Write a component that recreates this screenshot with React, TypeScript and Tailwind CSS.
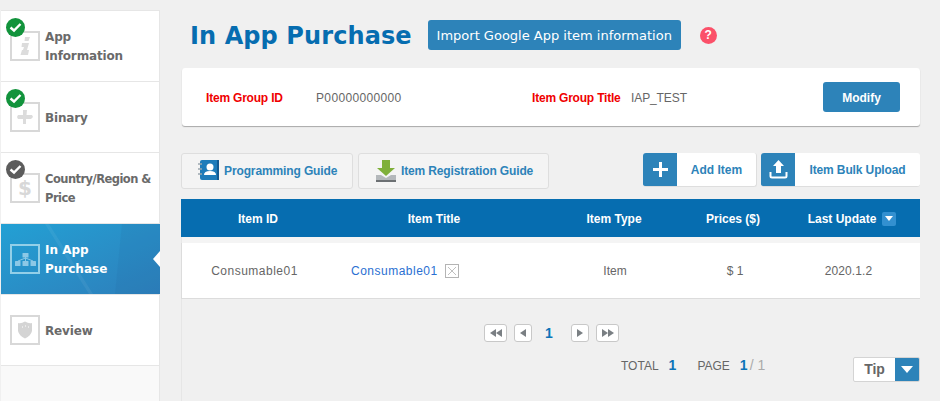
import React from "react";

const Check = ({ color }: { color: string }) => (
  <span className={`absolute left-[5px] top-[7px] flex h-[19px] w-[19px] items-center justify-center rounded-full ${color}`}>
    <svg width="13" height="11" viewBox="0 0 13 11">
      <path d="M1.5 5.5 L5 8.5 L11.5 2" fill="none" stroke="#fff" strokeWidth="2.4" />
    </svg>
  </span>
);

const Box = ({ active, children }: { active?: boolean; children: React.ReactNode }) => (
  <span className={`flex h-[30px] w-[30px] shrink-0 items-center justify-center border-[2px] ${active ? "border-[#93cfe8]" : "border-[#d8d8d8]"}`}>
    {children}
  </span>
);

const InfoIcon = () => (
  <svg width="11" height="19" viewBox="0 0 11 19" fill="#dcdcdc">
    <path d="M5 0 h5 l-1.5 4 h-4 z M2 6 h7 l-2 7 h2 l-1 5 H0.5 l1.5 -5 h1 l1 -3 H1.5 z" />
  </svg>
);
const PlusIcon = () => (
  <svg width="16" height="14" viewBox="0 0 16 14" fill="#dcdcdc">
    <path d="M6 0 h4 l-0.5 5 h5.5 l1 2 l-2 2 h-5 l0 5 h-3 l0 -5 H1 l-1 -2 l1 -2 h5 z" />
  </svg>
);
const DollarIcon = () => (
  <span className="text-[20px] leading-none font-bold text-[#d8d8d8]">$</span>
);
const TreeIcon = () => (
  <svg width="21" height="13" viewBox="0 0 21 13">
    <g fill="#8cc8e6">
      <rect x="7.5" y="0" width="6" height="4.5" rx="0.5" />
      <rect x="0" y="8" width="5.5" height="5" rx="0.5" />
      <rect x="7.5" y="8" width="6" height="5" rx="0.5" />
      <rect x="15.5" y="8" width="5.5" height="5" rx="0.5" />
    </g>
    <path d="M10.5 4 V8 M10.5 5 L3 8 M10.5 5 L18 8" stroke="#8cc8e6" fill="none" />
  </svg>
);
const ShieldIcon = () => (
  <svg width="16" height="18" viewBox="0 0 16 18">
    <path d="M1 2 Q4 3 8 0.5 Q12 3 15 2 V10 Q14 14.5 8 17.5 Q2 14.5 1 10 Z" fill="#d4d4d4" />
    <path d="M5 6 h1 M8 5 h1 M11 6 h1" stroke="#fff" />
  </svg>
);

const SideRow = ({ label, icon, check }: { label: React.ReactNode; icon: React.ReactNode; check?: string }) => (
  <div className="relative flex h-[71px] items-center gap-[5px] border-b border-[#e6e6e6] pl-[9px]">
    {check && <Check color={check} />}
    <Box>{icon}</Box>
    <span className="pt-[2px] text-[12px] leading-[19px] font-bold tracking-[-0.15px] whitespace-nowrap text-[#6a6a6a]">{label}</span>
  </div>
);

const PagerBtn = ({ w, children }: { w: string; children: React.ReactNode }) => (
  <span className={`flex h-[18px] ${w} items-center justify-center rounded-[3px] border border-[#c8c8c8] bg-white`}>{children}</span>
);

const Tri = ({ left }: { left?: boolean }) => (
  <svg width="6" height="8" viewBox="0 0 6 8">
    <path d={left ? "M6 0 V8 L0 4 Z" : "M0 0 V8 L6 4 Z"} fill="#7a7f83" />
  </svg>
);

export default function App() {
  return (
    <div className="flex h-[401px] w-[940px] overflow-hidden bg-[#f0f0f0] font-['Liberation_Sans',sans-serif]">
      {/* Sidebar */}
      <aside className="ml-[1px] mt-[10px] h-[391px] w-[159px] shrink-0 border-t border-r border-[#e6e6e6] bg-[#f9f9f9] font-['DejaVu_Sans',sans-serif]">
        <div className="bg-white">
          <SideRow check="bg-[#12933c]" icon={<InfoIcon />} label={<>App<br />Information</>} />
          <SideRow check="bg-[#12933c]" icon={<PlusIcon />} label="Binary" />
          <SideRow check="bg-[#5c5c5c]" icon={<DollarIcon />} label={<span className="text-[11.5px] tracking-[-0.55px]">Country/Region &amp;<br />Price</span>} />
          <div className="relative z-10 mr-[-1px] flex h-[71px] items-center gap-[5px] overflow-hidden border-b border-[#e6e6e6] bg-gradient-to-br from-[#22a0d4] to-[#2d7fbb] pl-[9px]">
            <svg className="absolute inset-0" width="159" height="70" viewBox="0 0 159 70">
              <path d="M44 0 L88 70 H92 L48 0 Z" fill="#fff" opacity="0.06" />
              <path d="M121 0 L114 70 H159 V0 Z" fill="#1f5fa0" opacity="0.12" />
            </svg>
            <span className="relative"><Box active><TreeIcon /></Box></span>
            <span className="relative pt-[2px] text-[12px] leading-[19px] font-bold text-white">In App<br />Purchase</span>
            <span className="absolute right-0 top-[27px] h-0 w-0 border-y-[8px] border-r-[7px] border-y-transparent border-r-white" />
          </div>
          <SideRow icon={<ShieldIcon />} label="Review" />
        </div>
      </aside>

      <div className="ml-[21px] flex w-[739px] shrink-0 flex-col">
        {/* Header */}
        <div className="mt-[20px] flex h-[30px] items-center pl-[9px]">
          <h1 className="pt-[1px] text-[24px] leading-[30px] font-bold tracking-[0.1px] text-[#066db0] font-['DejaVu_Sans',sans-serif]">In App Purchase</h1>
          <button className="ml-[16px] h-[30px] w-[253px] rounded-[3px] bg-[#2d83b9] pt-[1px] text-center text-[13px] text-white font-['DejaVu_Sans',sans-serif]">Import Google App item information</button>
          <span className="ml-[19px] flex h-[17px] w-[17px] items-center justify-center rounded-full bg-[#fb5069] text-[12px] font-bold text-white">?</span>
        </div>

        {/* Info card */}
        <div className="mt-[18px] ml-[1px] flex h-[58px] items-center rounded-[3px] bg-white pt-[1px] text-[12px] shadow-[0_1px_1px_#a8a8a8]">
          <span className="ml-[24px] w-[110px] font-bold tracking-[-0.2px] text-[#f00000]">Item Group ID</span>
          <span className="w-[216px] tracking-[0.35px] text-[#666]">P00000000000</span>
          <span className="w-[99px] font-bold tracking-[-0.2px] whitespace-nowrap text-[#f00000]">Item Group Title</span>
          <span className="w-[192px] tracking-[-0.1px] text-[#666]">IAP_TEST</span>
          <button className="mt-[-1px] h-[30px] w-[77px] rounded-[3px] bg-[#2d83b9] pt-[1px] text-[12px] font-bold text-white">Modify</button>
        </div>

        {/* Actions */}
        <div className="mt-[27px] flex h-[36px] items-start">
          <span className="flex h-[36px] w-[172px] items-center rounded-[3px] border border-[#dedede] bg-[#f4f4f4] pl-[15px] text-[12px] font-bold tracking-[-0.12px] text-[#2d83b9]">
            <svg width="24" height="24" viewBox="0 0 24 24" className="shrink-0">
              <rect x="3" y="1" width="19" height="20" rx="2" fill="#1e7cba" />
              <rect x="20" y="1" width="2" height="20" fill="#125a92" />
              <circle cx="13" cy="8" r="3.5" fill="#fff" />
              <path d="M7 16 Q7 12 13 12 Q19 12 19 16 Z" fill="#fff" />
              <path d="M1 5 h4 M1 10 h4 M1 15 h4" stroke="#9aa5ad" strokeWidth="1.5" />
            </svg>
            <span className="ml-[3px] whitespace-nowrap">Programming Guide</span>
          </span>
          <span className="ml-[5px] flex h-[36px] w-[191px] items-center rounded-[3px] border border-[#dedede] bg-[#f4f4f4] pl-[15px] text-[12px] font-bold tracking-[-0.14px] text-[#2d83b9]">
            <svg width="24" height="24" viewBox="0 0 24 24" className="shrink-0">
              <path d="M8 1 h8 v8 h5 L12 17 L3 9 h5 z" fill="#7fb03a" />
              <path d="M2 16 h5 l5 3 l5 -3 h5 v6 H2 z" fill="#b4b8bb" />
              <rect x="2" y="21" width="20" height="2" fill="#6c7073" />
            </svg>
            <span className="ml-[3px] whitespace-nowrap">Item Registration Guide</span>
          </span>
          <span className="ml-[94px] flex h-[34px] w-[114px] overflow-hidden rounded-[3px] border-r border-b border-[#dedede] bg-white text-[12px] font-bold text-[#2d83b9]">
            <span className="flex w-[34px] shrink-0 items-center justify-center bg-[#2d83b9]">
              <svg width="15" height="15" viewBox="0 0 15 15"><path d="M6 0 h3 v6 h6 v3 H9 v6 H6 V9 H0 V6 h6 z" fill="#fff" /></svg>
            </span>
            <span className="flex flex-1 items-center justify-center">Add Item</span>
          </span>
          <span className="ml-[4px] flex h-[34px] w-[159px] overflow-hidden rounded-[3px] border-b border-[#dedede] bg-white text-[12px] font-bold tracking-[-0.12px] text-[#2d83b9]">
            <span className="flex w-[34px] shrink-0 items-center justify-center bg-[#2d83b9]">
              <svg width="19" height="19" viewBox="0 0 19 19">
                <path d="M9.5 0 L15 6 H12 V13 H7 V6 H4 Z" fill="#fff" />
                <path d="M1.5 12 V16 Q1.5 17.5 3 17.5 H16 Q17.5 17.5 17.5 16 V12" stroke="#fff" strokeWidth="2" fill="none" />
              </svg>
            </span>
            <span className="flex flex-1 items-center justify-center">Item Bulk Upload</span>
          </span>
        </div>

        {/* Table */}
        <div className="mt-[10px] grid h-[38px] grid-cols-[154px_198px_162px_76px_149px] items-center bg-[#066db0] pt-[1px] text-center text-[12px] font-bold text-white">
          <span>Item ID</span>
          <span>Item Title</span>
          <span>Item Type</span>
          <span>Prices ($)</span>
          <span className="flex items-center justify-center gap-[6px] pl-[13px]">
            Last Update
            <span className="flex h-[14px] w-[14px] items-center justify-center rounded-[2px] bg-[#3390d0]">
              <span className="h-0 w-0 border-x-[4px] border-t-[5px] border-x-transparent border-t-white" />
            </span>
          </span>
        </div>
        <div className="h-[6px] border-l border-[#e8e8e8] bg-[#f4f4f4]" />
        <div className="grid h-[56px] grid-cols-[154px_198px_162px_76px_149px] items-center border-b border-l border-[#dcdcdc] bg-white text-center text-[12px] text-[#666]">
          <span className="pr-[9px] tracking-[0.5px]">Consumable01</span>
          <span className="flex items-center pl-[15px] text-left tracking-[0.5px] text-[#2a6fd2]">
            Consumable01
            <svg width="14" height="14" viewBox="0 0 14 14" className="ml-[7px]">
              <rect x="0.5" y="0.5" width="13" height="13" fill="#fff" stroke="#b4b4b4" />
              <path d="M3 3 L11 11 M11 3 L3 11" stroke="#c0c0c0" />
            </svg>
          </span>
          <span>Item</span>
          <span className="pl-[2px]">$ 1</span>
          <span className="pl-[4px] tracking-[0.1px]">2020.1.2</span>
        </div>

        {/* Footer region */}
        <div className="flex flex-1 flex-col border-l border-[#e6e6e6]">
          {/* Pager */}
          <div className="mt-[25px] flex h-[18px] items-center pl-[302px]">
            <PagerBtn w="w-[23px]"><Tri left /><Tri left /></PagerBtn>
            <span className="ml-[7px]"><PagerBtn w="w-[18px]"><Tri left /></PagerBtn></span>
            <span className="w-[39px] pr-[5px] text-center text-[14px] font-bold text-[#0c74b8]">1</span>
            <PagerBtn w="w-[18px]"><Tri /></PagerBtn>
            <span className="ml-[7px]"><PagerBtn w="w-[23px]"><Tri /><Tri /></PagerBtn></span>
          </div>

          {/* Totals */}
          <div className="mt-[15px] flex h-[25px] items-center text-[12px] text-[#666]">
            <div className="flex items-center pb-[8px] whitespace-nowrap">
              <span className="ml-[439px]">TOTAL</span>
              <span className="ml-[10px] text-[14px] font-bold text-[#0c74b8]">1</span>
              <span className="ml-[21px]">PAGE</span>
              <span className="ml-[10px] text-[14px] font-bold text-[#0c74b8]">1</span>
              <span className="ml-[2px] text-[14px] text-[#aaa]">/ 1</span>
            </div>
            <span className="ml-auto flex h-[25px] w-[67px] overflow-hidden rounded-[2px] border border-[#d4d4d4] bg-white">
              <span className="flex flex-1 items-center justify-center text-[14px] font-bold text-[#666]">Tip</span>
              <span className="flex w-[24px] items-center justify-center bg-[#2d83b9]">
                <span className="h-0 w-0 border-x-[6px] border-t-[7px] border-x-transparent border-t-white" />
              </span>
            </span>
          </div>
        </div>
      </div>
    </div>
  );
}
